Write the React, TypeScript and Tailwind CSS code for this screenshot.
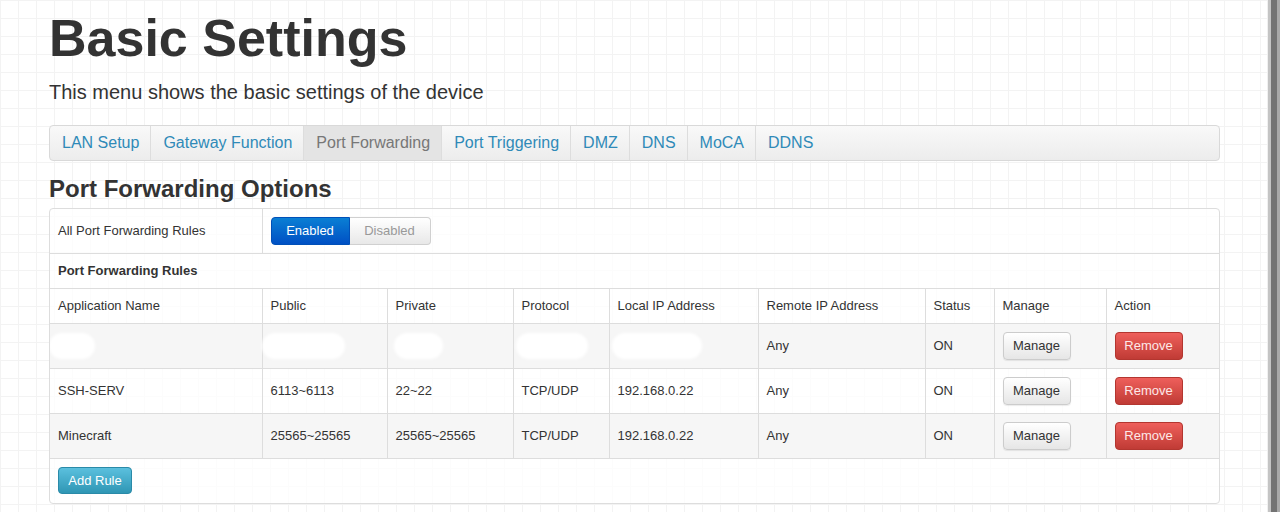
import React from 'react';

const tabs = ['LAN Setup', 'Gateway Function', 'Port Forwarding', 'Port Triggering', 'DMZ', 'DNS', 'MoCA', 'DDNS'];

const headers = ['Application Name', 'Public', 'Private', 'Protocol', 'Local IP Address', 'Remote IP Address', 'Status', 'Manage', 'Action'];

const rules = [
  { name: '', pub: '', priv: '', proto: '', local: '', hidden: true },
  { name: 'SSH-SERV', pub: '6113~6113', priv: '22~22', proto: 'TCP/UDP', local: '192.168.0.22', hidden: false },
  { name: 'Minecraft', pub: '25565~25565', priv: '25565~25565', proto: 'TCP/UDP', local: '192.168.0.22', hidden: false },
];

// redacted blobs in the first row (width, left offset inside the cell)
const blobs = [
  'w-[46px] ml-[-9px]',
  'w-[83px] ml-[-9px]',
  'w-[49px] ml-[-2px]',
  'w-[72px] ml-[-6px]',
  'w-[90px] ml-[-6px]',
];

const cell = 'px-2 align-middle border-r border-[#dddddd]';

const Blob: React.FC<{ cls: string }> = ({ cls }) => (
  <div className={`h-[26px] rounded-full bg-white blur-[1.5px] ${cls}`} />
);

const App: React.FC = () => {
  return (
    <div
      className="flex h-[512px] w-full overflow-hidden bg-white text-[#333333] font-['Liberation_Sans',Arial,sans-serif]"
    >
      <div className="flex-1 pl-[49px] pr-[47px] bg-[linear-gradient(to_right,#f3f3f3_1px,transparent_1px),linear-gradient(to_bottom,#f3f3f3_1px,transparent_1px)] bg-[size:18px_18px] border-r border-[#f0f0f0]">
        <h1 className="mt-[12px] text-[52px] leading-[52px] font-bold">Basic Settings</h1>
        <p className="mt-[14px] text-[20px] leading-[28px]">This menu shows the basic settings of the device</p>

        <nav className="mt-[19px] flex h-[36px] rounded-[4px] border border-[#d9d9d9] bg-[linear-gradient(to_bottom,#f9f9f9,#ececec)]">
          {tabs.map((t, i) => (
            <div
              key={t}
              className={`flex items-center pl-[12px] pr-[11px] text-[16px] ${i < tabs.length - 1 ? 'border-r border-[#dddddd]' : ''} ${
                t === 'Port Forwarding' ? 'bg-[#e4e4e4] text-[#777777]' : 'text-[#2f8ab8]'
              } ${i === 0 ? 'rounded-l-[4px]' : ''}`}
            >
              {t}
            </div>
          ))}
        </nav>

        <h2 className="mt-[12px] text-[24px] leading-[32px] font-bold">Port Forwarding Options</h2>

        <div className="mt-[3px] rounded-[4px] border border-[#dddddd] bg-white/70 overflow-hidden">
          <table className="w-full table-fixed border-collapse text-[13px]">
            <colgroup>
              <col className="w-[212px]" />
              <col className="w-[125px]" />
              <col className="w-[126px]" />
              <col className="w-[96px]" />
              <col className="w-[149px]" />
              <col className="w-[167px]" />
              <col className="w-[69px]" />
              <col className="w-[112px]" />
              <col />
            </colgroup>
            <tbody>
              <tr className="h-[44px]">
                <td className={cell}>All Port Forwarding Rules</td>
                <td colSpan={8} className="px-2 align-middle">
                  <div className="flex">
                    <button className="h-[28px] w-[79px] rounded-l-[4px] border border-[#0050b8] bg-[linear-gradient(to_bottom,#0a7fd4,#0050c4)] text-white">
                      Enabled
                    </button>
                    <button className="h-[28px] w-[81px] rounded-r-[4px] border border-l-0 border-[#d0d0d0] bg-[linear-gradient(to_bottom,#ffffff,#e8e8e8)] text-[#999999]">
                      Disabled
                    </button>
                  </div>
                </td>
              </tr>
              <tr className="h-[35px] border-t border-[#dddddd]">
                <td colSpan={9} className="px-2 align-middle font-bold">
                  Port Forwarding Rules
                </td>
              </tr>
              <tr className="h-[35px] border-t border-[#dddddd]">
                {headers.map((h, i) => (
                  <td key={h} className={i < headers.length - 1 ? cell : 'px-2 align-middle'}>
                    {h}
                  </td>
                ))}
              </tr>
              {rules.map((r, idx) => {
                const vals = [r.name, r.pub, r.priv, r.proto, r.local];
                return (
                  <tr key={idx} className={`h-[45px] border-t border-[#dddddd] ${idx % 2 === 0 ? 'bg-[#f6f6f6]' : ''}`}>
                    {vals.map((v, i) => (
                      <td key={i} className={cell}>
                        {r.hidden ? <Blob cls={blobs[i]} /> : v}
                      </td>
                    ))}
                    <td className={cell}>Any</td>
                    <td className={cell}>ON</td>
                    <td className={cell}>
                      <button className="h-[28px] w-[68px] rounded-[4px] border border-[#cccccc] bg-[linear-gradient(to_bottom,#ffffff,#e6e6e6)] text-[#333333] shadow-[0_1px_1px_rgba(0,0,0,0.08)]">
                        Manage
                      </button>
                    </td>
                    <td className="px-2 align-middle">
                      <button className="h-[28px] w-[68px] rounded-[4px] border border-[#b33630] bg-[linear-gradient(to_bottom,#ee5f5b,#c03b35)] text-[#fde8e8]">
                        Remove
                      </button>
                    </td>
                  </tr>
                );
              })}
              <tr className="h-[45px] border-t border-[#dddddd]">
                <td colSpan={9} className="px-2 align-middle">
                  <button className="h-[27px] w-[74px] rounded-[4px] border border-[#2a8aa8] bg-[linear-gradient(to_bottom,#5bc0de,#2f96b4)] text-white">
                    Add Rule
                  </button>
                </td>
              </tr>
            </tbody>
          </table>
        </div>
      </div>

      <div className="flex h-full">
        <div className="w-[3px] bg-[#c4c4c4]" />
        <div className="w-[6px] bg-[#737373]" />
        <div className="w-[3px] bg-[#a8a8a8]" />
      </div>
    </div>
  );
};

export default App;
